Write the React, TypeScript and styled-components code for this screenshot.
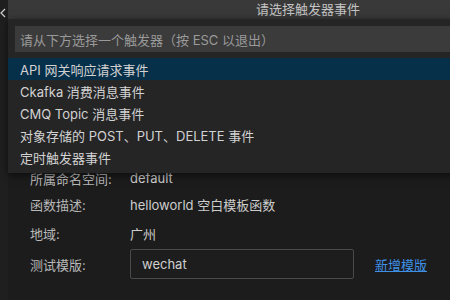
import styled, { createGlobalStyle } from "styled-components";

const GlobalStyle = createGlobalStyle`
  html, body {
    margin: 0;
    padding: 0;
    background: #1c1c1c;
    overflow: hidden;
  }
  body {
    font-family: "Inter", "Noto Sans CJK SC", sans-serif;
    font-size: 13px;
  }
`;

const Shell = styled.div`
  display: flex;
  width: 450px;
  height: 300px;
  overflow: hidden;
`;

const SideEdge = styled.div`
  width: 8px;
  flex-shrink: 0;
  background: #1f1f1f;
  color: #cfcfcf;
  display: flex;
  justify-content: flex-start;
  padding-top: 8px;
  box-sizing: border-box;
`;

const Main = styled.div`
  position: relative;
  flex: 1;
  display: flex;
  flex-direction: column;
  min-width: 0;
`;

const TitleBar = styled.div`
  height: 19px;
  background: #393939;
  color: #c4c4c4;
  display: flex;
  align-items: center;
  padding-left: 248px;
  font-size: 13px;
  line-height: 19px;
`;

const Body = styled.div`
  flex: 1;
  background: #1c1c1c;
  padding: 146px 0 0 22px;
  display: flex;
  flex-direction: column;
`;

const Row = styled.div<{ h?: number }>`
  display: flex;
  align-items: center;
  height: ${p => p.h || 26}px;
`;

const Label = styled.div`
  width: 100px;
  color: #b8b8b8;
`;

const Value = styled.div`
  color: #cdcdcd;
`;

const TextBox = styled.div`
  width: 224px;
  height: 30px;
  box-sizing: border-box;
  border: 1px solid #4a4a4a;
  border-radius: 2px;
  background: #1d1d1d;
  color: #d0d0d0;
  display: flex;
  align-items: center;
  padding-left: 11px;
`;

const Link = styled.a`
  margin-left: 21px;
  color: #3e8fe6;
  text-decoration: underline;
  cursor: pointer;
`;

const QuickPick = styled.div`
  position: absolute;
  top: 19px;
  left: 0;
  width: 460px;
  background: #252526;
  box-shadow: 0 2px 8px rgba(0, 0, 0, 0.6);
  padding: 7px 0 5px;
`;

const Input = styled.div`
  margin-left: 7px;
  height: 26px;
  background: #3b3b3b;
  color: #9a9a9a;
  display: flex;
  align-items: center;
  padding-left: 5px;
  font-size: 13px;
`;

const List = styled.ul`
  list-style: none;
  margin: 6px 0 0;
  padding: 0;
`;

const Item = styled.li<{ active?: boolean }>`
  height: 22px;
  display: flex;
  align-items: center;
  padding-left: 12px;
  color: #d2d2d2;
  background: ${p => (p.active ? "#062f4a" : "transparent")};
`;

const triggers = [
  "API 网关响应请求事件",
  "Ckafka 消费消息事件",
  "CMQ Topic 消息事件",
  "对象存储的 POST、PUT、DELETE 事件",
  "定时触发器事件",
];

const App: React.FC = () => {
  return (
    <Shell>
      <GlobalStyle />
      <SideEdge>
        <svg width="6" height="10" viewBox="0 0 6 10">
          <path d="M5 1 L1 5 L5 9" fill="none" stroke="#cfcfcf" strokeWidth="1.2" />
        </svg>
      </SideEdge>
      <Main>
        <TitleBar>请选择触发器事件</TitleBar>
        <Body>
          <Row>
            <Label>所属命名空间:</Label>
            <Value>default</Value>
          </Row>
          <Row>
            <Label>函数描述:</Label>
            <Value>helloworld 空白模板函数</Value>
          </Row>
          <Row h={32}>
            <Label>地域:</Label>
            <Value>广州</Value>
          </Row>
          <Row h={30}>
            <Label>测试模版:</Label>
            <TextBox>wechat</TextBox>
            <Link>新增模版</Link>
          </Row>
        </Body>
        <QuickPick>
          <Input>请从下方选择一个触发器（按 ESC 以退出）</Input>
          <List>
            {triggers.map((t, i) => (
              <Item key={t} active={i === 0}>{t}</Item>
            ))}
          </List>
        </QuickPick>
      </Main>
    </Shell>
  );
};

export default App;
